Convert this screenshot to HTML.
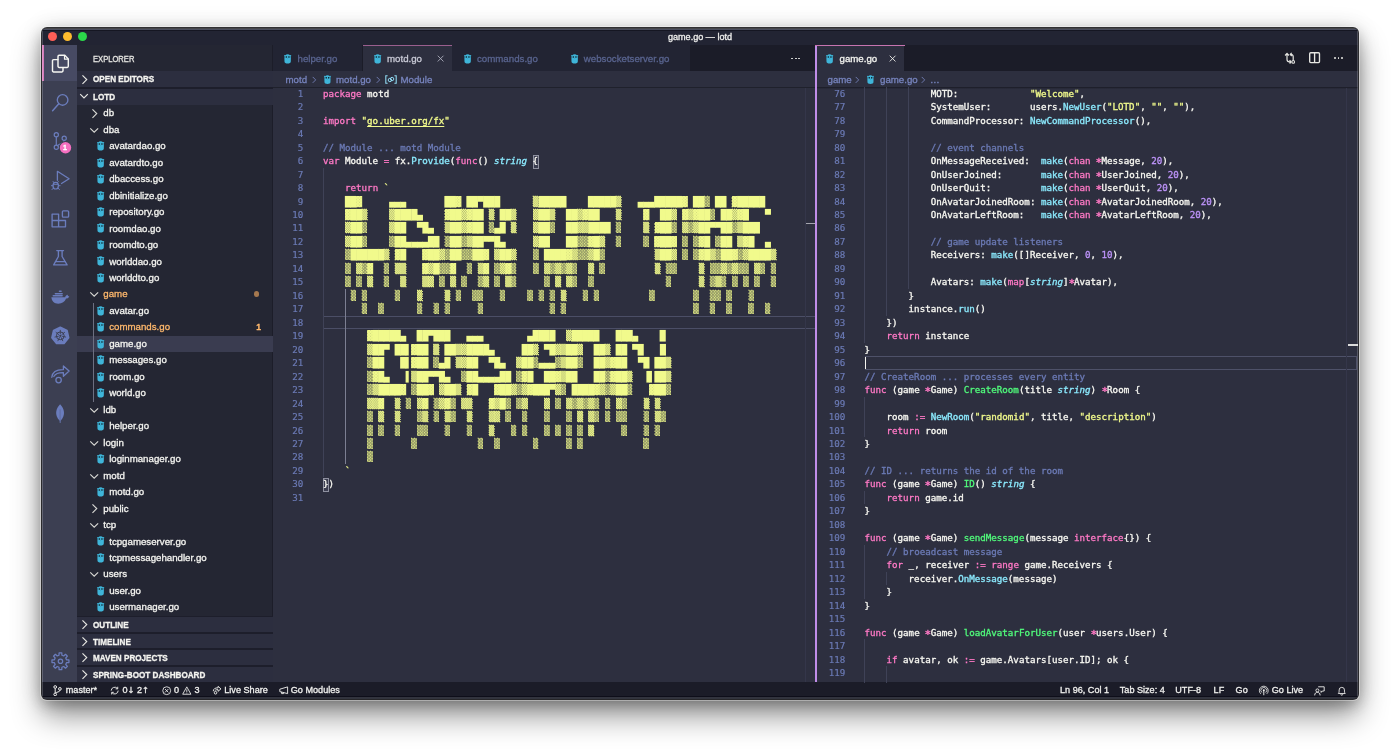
<!DOCTYPE html><html><head><meta charset="utf-8"><title>game.go — lotd</title><style>
*{box-sizing:border-box;margin:0;padding:0}
html,body{width:1400px;height:754px;overflow:hidden;background:#fff}
body{position:relative;font-family:"Liberation Sans","DejaVu Sans",sans-serif;font-size:9.7px;color:#f8f8f2}
.abs{position:absolute}
#win{position:absolute;left:42px;top:28.2px;width:1316.1px;height:670.8px;border-radius:5px;overflow:hidden;background:#2d2f3f;box-shadow:0 0 0 1px rgba(8,8,12,.82),0 0 0 2px rgba(255,255,255,.35),0 17px 30px rgba(0,0,0,.42),0 5px 14px rgba(0,0,0,.24),0 0 24px rgba(0,0,0,.12)}
#wrap{position:absolute;left:-42px;top:-28.2px;width:1400px;height:754px;will-change:transform}
.t{position:absolute;white-space:pre;line-height:12px;height:12px;-webkit-text-stroke:0.3px}
.b{font-weight:bold}
.code{position:absolute;white-space:pre;font-family:"DejaVu Sans Mono","Liberation Mono",monospace;font-size:9.17px;line-height:13.47px;height:13.47px;color:#f8f8f2;-webkit-text-stroke:0.32px}
.ln{position:absolute;white-space:pre;font-family:"DejaVu Sans Mono","Liberation Mono",monospace;font-size:9.17px;line-height:13.47px;height:13.47px;color:#6b7ab5;text-align:right;width:40px;-webkit-text-stroke:0.2px}
.k{color:#ff79c6}.f{color:#8be9fd}.g{color:#50fa7b}.s{color:#f1fa8c}.n{color:#bd93f9}.c{color:#6b7ab5}.ty{color:#8be9fd;font-style:italic}
.artl{font-size:9.75px;letter-spacing:-0.349px}.art{color:#f1fa8c;-webkit-text-stroke:0}.s1{background:rgba(241,250,140,.55)}.s2{background:rgba(241,250,140,.68)}.s3{background:rgba(241,250,140,.8)}
.as{display:inline-block;color:#ff79c6;transform:translateY(1.6px) scale(1.22)}.u{text-decoration:underline;text-decoration-thickness:1px;text-underline-offset:1.6px}
.bm{}
svg{position:absolute;overflow:visible}
</style></head><body><div id="win"><div id="wrap"><div class="abs" style="left:41.50px;top:28.00px;width:1317.00px;height:16.80px;background:#222433;"></div><div class="abs" style="left:47.80px;top:32.10px;width:9.2px;height:9.2px;border-radius:50%;background:#fe5f57"></div><div class="abs" style="left:62.90px;top:32.10px;width:9.2px;height:9.2px;border-radius:50%;background:#febc2e"></div><div class="abs" style="left:77.90px;top:32.10px;width:9.2px;height:9.2px;border-radius:50%;background:#2bd84a"></div><div class="t" style="left:600px;width:200px;text-align:center;top:30.90px;color:#f0f0ee;font-size:9.1px">game.go — lotd</div><div class="abs" style="left:41.50px;top:44.70px;width:35.60px;height:637.80px;background:#3c3f52;"></div><div class="abs" style="left:41.50px;top:44.70px;width:35.60px;height:35.90px;background:#474a63;"></div><div class="abs" style="left:42.00px;top:44.70px;width:1.80px;height:35.90px;background:#d67bbb;"></div><div class="abs" style="left:77.00px;top:44.70px;width:195.50px;height:637.80px;background:#242633;"></div><div class="abs" style="left:272.50px;top:44.70px;width:1086.00px;height:637.80px;background:#2d2f3f;"></div><div class="abs" style="left:41.50px;top:682.30px;width:1317.00px;height:16.30px;background:#1b1c28;"></div><div class="abs" style="left:272.10px;top:44.70px;width:0.90px;height:637.60px;background:#1c1d29;"></div><svg style="left:41.5px;top:44.7px" width="36" height="638" viewBox="41.5 44.7 36 638"><path d="M58.6 55 H64.3 L67.8 58.6 V66 a1.1 1.1 0 0 1 -1.1 1.1 H58.6 a1.1 1.1 0 0 1 -1.1 -1.1 V56.1 a1.1 1.1 0 0 1 1.1 -1.1 Z" fill="none" stroke="#f6f6f2" stroke-width="1.45" stroke-linejoin="round" stroke-linecap="round" /><path d="M64 55.2 V58.9 H67.6" fill="none" stroke="#f6f6f2" stroke-width="1.2" stroke-linejoin="round" stroke-linecap="round" /><path d="M57.4 59.3 H53.1 a1.1 1.1 0 0 0 -1.1 1.1 V70.5 a1.1 1.1 0 0 0 1.1 1.1 H61.4 a1.1 1.1 0 0 0 1.1 -1.1 V67.3" fill="none" stroke="#f6f6f2" stroke-width="1.45" stroke-linejoin="round" stroke-linecap="round" /><circle cx="62.1" cy="99.6" r="5.3" fill="none" stroke="#6b7dbd" stroke-width="1.35"/><path d="M58.3 103.5 L52.1 110.5" fill="none" stroke="#6b7dbd" stroke-width="1.45" stroke-linejoin="round" stroke-linecap="round" /><circle cx="55.8" cy="134.4" r="2.1" fill="none" stroke="#6b7dbd" stroke-width="1.2"/><circle cx="55.8" cy="147.0" r="2.1" fill="none" stroke="#6b7dbd" stroke-width="1.2"/><circle cx="63.7" cy="137.9" r="2.1" fill="none" stroke="#6b7dbd" stroke-width="1.2"/><path d="M55.8 136.6 V144.8 M63.7 140.1 C63.7 143.6 58.8 143.2 57.2 145.2" fill="none" stroke="#6b7dbd" stroke-width="1.2" stroke-linejoin="round" stroke-linecap="round" /><circle cx="65" cy="147.4" r="6.6" fill="#3c3f52"/><circle cx="65" cy="147.4" r="5.7" fill="#f56fc0"/><path d="M56.9 180 V171 L68.6 178.5 L61 183.2" fill="none" stroke="#6b7dbd" stroke-width="1.3" stroke-linejoin="round" stroke-linecap="round" /><ellipse cx="55.2" cy="185.4" rx="2.7" ry="3.3" fill="none" stroke="#6b7dbd" stroke-width="1.2"/><path d="M53.4 182.3 L52.6 181.2 M57 182.3 L57.8 181.2 M52.5 185.4 H50.9 M57.9 185.4 H59.6 M53 187.7 L51.5 189.3 M57.4 187.7 L58.9 189.3 M52.8 184 H57.6" fill="none" stroke="#6b7dbd" stroke-width="1.0" stroke-linejoin="round" stroke-linecap="round" /><path d="M51.6 213.8 H58.1 V220.2 H65 V226.5 H51.6 Z M58.1 220.2 V226.5 M51.6 220.2 H58.1" fill="none" stroke="#6b7dbd" stroke-width="1.35" stroke-linejoin="round" stroke-linecap="round" /><rect x="61.9" y="210.6" width="6.2" height="6.2" rx="0.9" fill="none" stroke="#6b7dbd" stroke-width="1.35"/><path d="M56.3 250.3 H63 M57.9 250.5 V256.2 L53.2 264.6 H66.6 L61.6 256.2 V250.5" fill="none" stroke="#6b7dbd" stroke-width="1.35" stroke-linejoin="round" stroke-linecap="round" /><path d="M55 261.4 H64.6" fill="none" stroke="#6b7dbd" stroke-width="1.3" stroke-linejoin="round" stroke-linecap="round" /><path d="M50.9 297 H64.6 C65 295.4 66.2 294.6 67.2 294.4 C67.2 295.4 67.6 295.9 68.8 296 C68.4 297.6 67 298.3 65.6 298.3 C64.4 301.8 61.6 303.4 57.8 303.4 C53.8 303.4 51.2 301.2 50.9 297 Z" fill="#6b7dbd"/><path d="M52.8 295.4 H61.6 M54.9 293.4 H61.6 M59 291 H61" fill="none" stroke="#6b7dbd" stroke-width="1.6" stroke-linejoin="round" stroke-linecap="round" stroke-dasharray="1.55 0.55" stroke-linecap="butt"/><polygon points="59.80,326.90 66.52,330.14 68.18,337.41 63.53,343.25 56.07,343.25 51.42,337.41 53.08,330.14" fill="#6b7dbd" stroke="#6b7dbd" stroke-width="1.6" stroke-linejoin="round"/><circle cx="59.8" cy="335.5" r="3.9" fill="none" stroke="#3c3f52" stroke-width="1"/><path d="M59.80 333.90 L59.80 329.60" stroke="#3c3f52" stroke-width="0.9"/><path d="M61.05 334.50 L64.41 331.82" stroke="#3c3f52" stroke-width="0.9"/><path d="M61.36 335.86 L65.55 336.81" stroke="#3c3f52" stroke-width="0.9"/><path d="M60.49 336.94 L62.36 340.82" stroke="#3c3f52" stroke-width="0.9"/><path d="M59.11 336.94 L57.24 340.82" stroke="#3c3f52" stroke-width="0.9"/><path d="M58.24 335.86 L54.05 336.81" stroke="#3c3f52" stroke-width="0.9"/><path d="M58.55 334.50 L55.19 331.82" stroke="#3c3f52" stroke-width="0.9"/><circle cx="59.8" cy="335.5" r="1.1" fill="#3c3f52"/><path d="M51.3 377 C51.8 371.6 56.6 369.2 62.9 369.3 V365.6 L68.6 370.8 L62.9 375.9 V372.4 C58.6 372.3 55.2 373 53.3 376.2" fill="none" stroke="#6b7dbd" stroke-width="1.3" stroke-linejoin="round" stroke-linecap="round" /><circle cx="58.1" cy="379.8" r="2.7" fill="none" stroke="#6b7dbd" stroke-width="1.3"/><path d="M59.6 404 C63.8 408.4 65.6 414.6 60.2 420.4 L60 422.8 L59.3 422.8 L59.1 420.4 C53.6 414.6 55.4 408.4 59.6 404 Z" fill="#6b7dbd"/><path d="M59.6 409 V421" stroke="#3c3f52" stroke-width="0.5" opacity=".55"/><polygon points="58.50,654.92 58.60,652.46 61.30,652.46 61.40,654.92 63.19,655.66 65.00,653.99 66.91,655.90 65.24,657.71 65.98,659.50 68.44,659.60 68.44,662.30 65.98,662.40 65.24,664.19 66.91,666.00 65.00,667.91 63.19,666.24 61.40,666.98 61.30,669.44 58.60,669.44 58.50,666.98 56.71,666.24 54.90,667.91 52.99,666.00 54.66,664.19 53.92,662.40 51.46,662.30 51.46,659.60 53.92,659.50 54.66,657.71 52.99,655.90 54.90,653.99 56.71,655.66" fill="none" stroke="#6b7dbd" stroke-width="1.25" stroke-linejoin="round"/><circle cx="59.95" cy="660.95" r="2.2" fill="none" stroke="#6b7dbd" stroke-width="1.25"/></svg><div class="t b" style="left:59px;width:12px;text-align:center;top:141.50px;font-size:7px;color:#fff">1</div><div class="t" style="left:92.70px;top:53.30px;transform:scaleX(0.885);transform-origin:0 0;color:#e6e6e2;font-size:8.6px;">EXPLORER</div><div class="abs" style="left:77.00px;top:70.80px;width:195.50px;height:16.30px;background:#2c2e3f;"></div><svg style="left:79.62px;top:73.70px" width="8.96" height="11.20" viewBox="0 0 8 10"><path d="M2.2 1.2 L6 5 L2.2 8.8" fill="none" stroke="#e8e8e4" stroke-width="1.05"/></svg><div class="t b" style="left:92.70px;top:73.20px;transform:scaleX(0.945);transform-origin:0 0;color:#f4f4f0;font-size:8.6px;">OPEN EDITORS</div><div class="abs" style="left:77.00px;top:87.10px;width:195.50px;height:17.50px;background:#2c2e3f;"></div><div class="abs" style="left:77.00px;top:87.10px;width:195.50px;height:1.60px;background:#1d1e2b;"></div><svg style="left:79.00px;top:92.20px" width="10.00" height="8.00" viewBox="0 0 10 8"><path d="M1.2 2.2 L5 6 L8.8 2.2" fill="none" stroke="#e8e8e4" stroke-width="1.15"/></svg><div class="t b" style="left:92.70px;top:90.60px;transform:scaleX(0.945);transform-origin:0 0;color:#f4f4f0;font-size:8.6px;">LOTD</div><div class="abs" style="left:77.00px;top:615.50px;width:195.50px;height:16.47px;background:#2c2e3f;"></div><div class="abs" style="left:77.00px;top:615.50px;width:195.50px;height:1.60px;background:#1d1e2b;"></div><svg style="left:79.62px;top:619.20px" width="8.96" height="11.20" viewBox="0 0 8 10"><path d="M2.2 1.2 L6 5 L2.2 8.8" fill="none" stroke="#e8e8e4" stroke-width="1.05"/></svg><div class="t b" style="left:92.70px;top:619.00px;transform:scaleX(0.945);transform-origin:0 0;color:#f4f4f0;font-size:8.6px;">OUTLINE</div><div class="abs" style="left:77.00px;top:631.97px;width:195.50px;height:16.47px;background:#2c2e3f;"></div><div class="abs" style="left:77.00px;top:631.97px;width:195.50px;height:1.60px;background:#1d1e2b;"></div><svg style="left:79.62px;top:635.67px" width="8.96" height="11.20" viewBox="0 0 8 10"><path d="M2.2 1.2 L6 5 L2.2 8.8" fill="none" stroke="#e8e8e4" stroke-width="1.05"/></svg><div class="t b" style="left:92.70px;top:635.97px;transform:scaleX(0.945);transform-origin:0 0;color:#f4f4f0;font-size:8.6px;">TIMELINE</div><div class="abs" style="left:77.00px;top:648.44px;width:195.50px;height:16.47px;background:#2c2e3f;"></div><div class="abs" style="left:77.00px;top:648.44px;width:195.50px;height:1.60px;background:#1d1e2b;"></div><svg style="left:79.62px;top:652.14px" width="8.96" height="11.20" viewBox="0 0 8 10"><path d="M2.2 1.2 L6 5 L2.2 8.8" fill="none" stroke="#e8e8e4" stroke-width="1.05"/></svg><div class="t b" style="left:92.70px;top:651.94px;transform:scaleX(0.945);transform-origin:0 0;color:#f4f4f0;font-size:8.6px;">MAVEN PROJECTS</div><div class="abs" style="left:77.00px;top:664.91px;width:195.50px;height:17.09px;background:#2c2e3f;"></div><div class="abs" style="left:77.00px;top:664.91px;width:195.50px;height:1.60px;background:#1d1e2b;"></div><svg style="left:79.62px;top:668.61px" width="8.96" height="11.20" viewBox="0 0 8 10"><path d="M2.2 1.2 L6 5 L2.2 8.8" fill="none" stroke="#e8e8e4" stroke-width="1.05"/></svg><div class="t b" style="left:92.70px;top:668.91px;transform:scaleX(0.945);transform-origin:0 0;color:#f4f4f0;font-size:8.6px;">SPRING-BOOT DASHBOARD</div><svg style="left:90.02px;top:107.70px" width="8.96" height="11.20" viewBox="0 0 8 10"><path d="M2.2 1.2 L6 5 L2.2 8.8" fill="none" stroke="#d8d8d4" stroke-width="1.05"/></svg><div class="t" style="left:103.30px;top:107.30px;color:#f4f4f0;">db</div><svg style="left:89.40px;top:125.71px" width="10.40" height="8.32" viewBox="0 0 10 8"><path d="M1.2 2.2 L5 6 L8.8 2.2" fill="none" stroke="#d8d8d4" stroke-width="1.1"/></svg><div class="t" style="left:103.30px;top:123.77px;color:#f4f4f0;">dba</div><svg style="left:96.60px;top:141.14px" width="7.30" height="9.80" viewBox="0 0 75 99"><circle cx="9" cy="17" r="8.5" fill="#3fb5d9"/><circle cx="66" cy="17" r="8.5" fill="#3fb5d9"/><path d="M4 42 C4 14 18 2 37.5 2 C57 2 71 14 71 42 L70 76 C70 92 56 97 37.5 97 C19 97 5 92 5 76 Z" fill="#3fb5d9"/><circle cx="24" cy="30" r="8.5" fill="#0b1a22"/><circle cx="51" cy="30" r="8.5" fill="#0b1a22"/><ellipse cx="37.5" cy="45" rx="7" ry="4" fill="#2f9fc4"/></svg><div class="t" style="left:109.20px;top:140.24px;color:#f4f4f0;">avatardao.go</div><svg style="left:96.60px;top:157.61px" width="7.30" height="9.80" viewBox="0 0 75 99"><circle cx="9" cy="17" r="8.5" fill="#3fb5d9"/><circle cx="66" cy="17" r="8.5" fill="#3fb5d9"/><path d="M4 42 C4 14 18 2 37.5 2 C57 2 71 14 71 42 L70 76 C70 92 56 97 37.5 97 C19 97 5 92 5 76 Z" fill="#3fb5d9"/><circle cx="24" cy="30" r="8.5" fill="#0b1a22"/><circle cx="51" cy="30" r="8.5" fill="#0b1a22"/><ellipse cx="37.5" cy="45" rx="7" ry="4" fill="#2f9fc4"/></svg><div class="t" style="left:109.20px;top:156.71px;color:#f4f4f0;">avatardto.go</div><svg style="left:96.60px;top:174.08px" width="7.30" height="9.80" viewBox="0 0 75 99"><circle cx="9" cy="17" r="8.5" fill="#3fb5d9"/><circle cx="66" cy="17" r="8.5" fill="#3fb5d9"/><path d="M4 42 C4 14 18 2 37.5 2 C57 2 71 14 71 42 L70 76 C70 92 56 97 37.5 97 C19 97 5 92 5 76 Z" fill="#3fb5d9"/><circle cx="24" cy="30" r="8.5" fill="#0b1a22"/><circle cx="51" cy="30" r="8.5" fill="#0b1a22"/><ellipse cx="37.5" cy="45" rx="7" ry="4" fill="#2f9fc4"/></svg><div class="t" style="left:109.20px;top:173.18px;color:#f4f4f0;">dbaccess.go</div><svg style="left:96.60px;top:190.55px" width="7.30" height="9.80" viewBox="0 0 75 99"><circle cx="9" cy="17" r="8.5" fill="#3fb5d9"/><circle cx="66" cy="17" r="8.5" fill="#3fb5d9"/><path d="M4 42 C4 14 18 2 37.5 2 C57 2 71 14 71 42 L70 76 C70 92 56 97 37.5 97 C19 97 5 92 5 76 Z" fill="#3fb5d9"/><circle cx="24" cy="30" r="8.5" fill="#0b1a22"/><circle cx="51" cy="30" r="8.5" fill="#0b1a22"/><ellipse cx="37.5" cy="45" rx="7" ry="4" fill="#2f9fc4"/></svg><div class="t" style="left:109.20px;top:189.65px;color:#f4f4f0;">dbinitialize.go</div><svg style="left:96.60px;top:207.02px" width="7.30" height="9.80" viewBox="0 0 75 99"><circle cx="9" cy="17" r="8.5" fill="#3fb5d9"/><circle cx="66" cy="17" r="8.5" fill="#3fb5d9"/><path d="M4 42 C4 14 18 2 37.5 2 C57 2 71 14 71 42 L70 76 C70 92 56 97 37.5 97 C19 97 5 92 5 76 Z" fill="#3fb5d9"/><circle cx="24" cy="30" r="8.5" fill="#0b1a22"/><circle cx="51" cy="30" r="8.5" fill="#0b1a22"/><ellipse cx="37.5" cy="45" rx="7" ry="4" fill="#2f9fc4"/></svg><div class="t" style="left:109.20px;top:206.12px;color:#f4f4f0;">repository.go</div><svg style="left:96.60px;top:223.49px" width="7.30" height="9.80" viewBox="0 0 75 99"><circle cx="9" cy="17" r="8.5" fill="#3fb5d9"/><circle cx="66" cy="17" r="8.5" fill="#3fb5d9"/><path d="M4 42 C4 14 18 2 37.5 2 C57 2 71 14 71 42 L70 76 C70 92 56 97 37.5 97 C19 97 5 92 5 76 Z" fill="#3fb5d9"/><circle cx="24" cy="30" r="8.5" fill="#0b1a22"/><circle cx="51" cy="30" r="8.5" fill="#0b1a22"/><ellipse cx="37.5" cy="45" rx="7" ry="4" fill="#2f9fc4"/></svg><div class="t" style="left:109.20px;top:222.59px;color:#f4f4f0;">roomdao.go</div><svg style="left:96.60px;top:239.96px" width="7.30" height="9.80" viewBox="0 0 75 99"><circle cx="9" cy="17" r="8.5" fill="#3fb5d9"/><circle cx="66" cy="17" r="8.5" fill="#3fb5d9"/><path d="M4 42 C4 14 18 2 37.5 2 C57 2 71 14 71 42 L70 76 C70 92 56 97 37.5 97 C19 97 5 92 5 76 Z" fill="#3fb5d9"/><circle cx="24" cy="30" r="8.5" fill="#0b1a22"/><circle cx="51" cy="30" r="8.5" fill="#0b1a22"/><ellipse cx="37.5" cy="45" rx="7" ry="4" fill="#2f9fc4"/></svg><div class="t" style="left:109.20px;top:239.06px;color:#f4f4f0;">roomdto.go</div><svg style="left:96.60px;top:256.43px" width="7.30" height="9.80" viewBox="0 0 75 99"><circle cx="9" cy="17" r="8.5" fill="#3fb5d9"/><circle cx="66" cy="17" r="8.5" fill="#3fb5d9"/><path d="M4 42 C4 14 18 2 37.5 2 C57 2 71 14 71 42 L70 76 C70 92 56 97 37.5 97 C19 97 5 92 5 76 Z" fill="#3fb5d9"/><circle cx="24" cy="30" r="8.5" fill="#0b1a22"/><circle cx="51" cy="30" r="8.5" fill="#0b1a22"/><ellipse cx="37.5" cy="45" rx="7" ry="4" fill="#2f9fc4"/></svg><div class="t" style="left:109.20px;top:255.53px;color:#f4f4f0;">worlddao.go</div><svg style="left:96.60px;top:272.90px" width="7.30" height="9.80" viewBox="0 0 75 99"><circle cx="9" cy="17" r="8.5" fill="#3fb5d9"/><circle cx="66" cy="17" r="8.5" fill="#3fb5d9"/><path d="M4 42 C4 14 18 2 37.5 2 C57 2 71 14 71 42 L70 76 C70 92 56 97 37.5 97 C19 97 5 92 5 76 Z" fill="#3fb5d9"/><circle cx="24" cy="30" r="8.5" fill="#0b1a22"/><circle cx="51" cy="30" r="8.5" fill="#0b1a22"/><ellipse cx="37.5" cy="45" rx="7" ry="4" fill="#2f9fc4"/></svg><div class="t" style="left:109.20px;top:272.00px;color:#f4f4f0;">worlddto.go</div><svg style="left:89.40px;top:290.41px" width="10.40" height="8.32" viewBox="0 0 10 8"><path d="M1.2 2.2 L5 6 L8.8 2.2" fill="none" stroke="#d8d8d4" stroke-width="1.1"/></svg><div class="t" style="left:103.30px;top:288.47px;color:#ffb86c;">game</div><div class="abs" style="left:253.7px;top:291.47px;width:5.6px;height:5.6px;border-radius:50%;background:#a5784f"></div><svg style="left:96.60px;top:305.84px" width="7.30" height="9.80" viewBox="0 0 75 99"><circle cx="9" cy="17" r="8.5" fill="#3fb5d9"/><circle cx="66" cy="17" r="8.5" fill="#3fb5d9"/><path d="M4 42 C4 14 18 2 37.5 2 C57 2 71 14 71 42 L70 76 C70 92 56 97 37.5 97 C19 97 5 92 5 76 Z" fill="#3fb5d9"/><circle cx="24" cy="30" r="8.5" fill="#0b1a22"/><circle cx="51" cy="30" r="8.5" fill="#0b1a22"/><ellipse cx="37.5" cy="45" rx="7" ry="4" fill="#2f9fc4"/></svg><div class="t" style="left:109.20px;top:304.94px;color:#f4f4f0;">avatar.go</div><svg style="left:96.60px;top:322.31px" width="7.30" height="9.80" viewBox="0 0 75 99"><circle cx="9" cy="17" r="8.5" fill="#3fb5d9"/><circle cx="66" cy="17" r="8.5" fill="#3fb5d9"/><path d="M4 42 C4 14 18 2 37.5 2 C57 2 71 14 71 42 L70 76 C70 92 56 97 37.5 97 C19 97 5 92 5 76 Z" fill="#3fb5d9"/><circle cx="24" cy="30" r="8.5" fill="#0b1a22"/><circle cx="51" cy="30" r="8.5" fill="#0b1a22"/><ellipse cx="37.5" cy="45" rx="7" ry="4" fill="#2f9fc4"/></svg><div class="t" style="left:109.20px;top:321.41px;color:#ffb86c;">commands.go</div><div class="t b" style="left:256.20px;top:321.41px;color:#ffb86c;font-size:8.6px;">1</div><div class="abs" style="left:77.00px;top:335.58px;width:195.50px;height:16.47px;background:#3a3c50;"></div><svg style="left:96.60px;top:338.78px" width="7.30" height="9.80" viewBox="0 0 75 99"><circle cx="9" cy="17" r="8.5" fill="#3fb5d9"/><circle cx="66" cy="17" r="8.5" fill="#3fb5d9"/><path d="M4 42 C4 14 18 2 37.5 2 C57 2 71 14 71 42 L70 76 C70 92 56 97 37.5 97 C19 97 5 92 5 76 Z" fill="#3fb5d9"/><circle cx="24" cy="30" r="8.5" fill="#0b1a22"/><circle cx="51" cy="30" r="8.5" fill="#0b1a22"/><ellipse cx="37.5" cy="45" rx="7" ry="4" fill="#2f9fc4"/></svg><div class="t" style="left:109.20px;top:337.88px;color:#f4f4f0;">game.go</div><svg style="left:96.60px;top:355.25px" width="7.30" height="9.80" viewBox="0 0 75 99"><circle cx="9" cy="17" r="8.5" fill="#3fb5d9"/><circle cx="66" cy="17" r="8.5" fill="#3fb5d9"/><path d="M4 42 C4 14 18 2 37.5 2 C57 2 71 14 71 42 L70 76 C70 92 56 97 37.5 97 C19 97 5 92 5 76 Z" fill="#3fb5d9"/><circle cx="24" cy="30" r="8.5" fill="#0b1a22"/><circle cx="51" cy="30" r="8.5" fill="#0b1a22"/><ellipse cx="37.5" cy="45" rx="7" ry="4" fill="#2f9fc4"/></svg><div class="t" style="left:109.20px;top:354.35px;color:#f4f4f0;">messages.go</div><svg style="left:96.60px;top:371.72px" width="7.30" height="9.80" viewBox="0 0 75 99"><circle cx="9" cy="17" r="8.5" fill="#3fb5d9"/><circle cx="66" cy="17" r="8.5" fill="#3fb5d9"/><path d="M4 42 C4 14 18 2 37.5 2 C57 2 71 14 71 42 L70 76 C70 92 56 97 37.5 97 C19 97 5 92 5 76 Z" fill="#3fb5d9"/><circle cx="24" cy="30" r="8.5" fill="#0b1a22"/><circle cx="51" cy="30" r="8.5" fill="#0b1a22"/><ellipse cx="37.5" cy="45" rx="7" ry="4" fill="#2f9fc4"/></svg><div class="t" style="left:109.20px;top:370.82px;color:#f4f4f0;">room.go</div><svg style="left:96.60px;top:388.19px" width="7.30" height="9.80" viewBox="0 0 75 99"><circle cx="9" cy="17" r="8.5" fill="#3fb5d9"/><circle cx="66" cy="17" r="8.5" fill="#3fb5d9"/><path d="M4 42 C4 14 18 2 37.5 2 C57 2 71 14 71 42 L70 76 C70 92 56 97 37.5 97 C19 97 5 92 5 76 Z" fill="#3fb5d9"/><circle cx="24" cy="30" r="8.5" fill="#0b1a22"/><circle cx="51" cy="30" r="8.5" fill="#0b1a22"/><ellipse cx="37.5" cy="45" rx="7" ry="4" fill="#2f9fc4"/></svg><div class="t" style="left:109.20px;top:387.29px;color:#f4f4f0;">world.go</div><svg style="left:89.40px;top:405.70px" width="10.40" height="8.32" viewBox="0 0 10 8"><path d="M1.2 2.2 L5 6 L8.8 2.2" fill="none" stroke="#d8d8d4" stroke-width="1.1"/></svg><div class="t" style="left:103.30px;top:403.76px;color:#f4f4f0;">ldb</div><svg style="left:96.60px;top:421.13px" width="7.30" height="9.80" viewBox="0 0 75 99"><circle cx="9" cy="17" r="8.5" fill="#3fb5d9"/><circle cx="66" cy="17" r="8.5" fill="#3fb5d9"/><path d="M4 42 C4 14 18 2 37.5 2 C57 2 71 14 71 42 L70 76 C70 92 56 97 37.5 97 C19 97 5 92 5 76 Z" fill="#3fb5d9"/><circle cx="24" cy="30" r="8.5" fill="#0b1a22"/><circle cx="51" cy="30" r="8.5" fill="#0b1a22"/><ellipse cx="37.5" cy="45" rx="7" ry="4" fill="#2f9fc4"/></svg><div class="t" style="left:109.20px;top:420.23px;color:#f4f4f0;">helper.go</div><svg style="left:89.40px;top:438.64px" width="10.40" height="8.32" viewBox="0 0 10 8"><path d="M1.2 2.2 L5 6 L8.8 2.2" fill="none" stroke="#d8d8d4" stroke-width="1.1"/></svg><div class="t" style="left:103.30px;top:436.70px;color:#f4f4f0;">login</div><svg style="left:96.60px;top:454.07px" width="7.30" height="9.80" viewBox="0 0 75 99"><circle cx="9" cy="17" r="8.5" fill="#3fb5d9"/><circle cx="66" cy="17" r="8.5" fill="#3fb5d9"/><path d="M4 42 C4 14 18 2 37.5 2 C57 2 71 14 71 42 L70 76 C70 92 56 97 37.5 97 C19 97 5 92 5 76 Z" fill="#3fb5d9"/><circle cx="24" cy="30" r="8.5" fill="#0b1a22"/><circle cx="51" cy="30" r="8.5" fill="#0b1a22"/><ellipse cx="37.5" cy="45" rx="7" ry="4" fill="#2f9fc4"/></svg><div class="t" style="left:109.20px;top:453.17px;color:#f4f4f0;">loginmanager.go</div><svg style="left:89.40px;top:471.58px" width="10.40" height="8.32" viewBox="0 0 10 8"><path d="M1.2 2.2 L5 6 L8.8 2.2" fill="none" stroke="#d8d8d4" stroke-width="1.1"/></svg><div class="t" style="left:103.30px;top:469.64px;color:#f4f4f0;">motd</div><svg style="left:96.60px;top:487.01px" width="7.30" height="9.80" viewBox="0 0 75 99"><circle cx="9" cy="17" r="8.5" fill="#3fb5d9"/><circle cx="66" cy="17" r="8.5" fill="#3fb5d9"/><path d="M4 42 C4 14 18 2 37.5 2 C57 2 71 14 71 42 L70 76 C70 92 56 97 37.5 97 C19 97 5 92 5 76 Z" fill="#3fb5d9"/><circle cx="24" cy="30" r="8.5" fill="#0b1a22"/><circle cx="51" cy="30" r="8.5" fill="#0b1a22"/><ellipse cx="37.5" cy="45" rx="7" ry="4" fill="#2f9fc4"/></svg><div class="t" style="left:109.20px;top:486.11px;color:#f4f4f0;">motd.go</div><svg style="left:90.02px;top:502.98px" width="8.96" height="11.20" viewBox="0 0 8 10"><path d="M2.2 1.2 L6 5 L2.2 8.8" fill="none" stroke="#d8d8d4" stroke-width="1.05"/></svg><div class="t" style="left:103.30px;top:502.58px;color:#f4f4f0;">public</div><svg style="left:89.40px;top:520.99px" width="10.40" height="8.32" viewBox="0 0 10 8"><path d="M1.2 2.2 L5 6 L8.8 2.2" fill="none" stroke="#d8d8d4" stroke-width="1.1"/></svg><div class="t" style="left:103.30px;top:519.05px;color:#f4f4f0;">tcp</div><svg style="left:96.60px;top:536.42px" width="7.30" height="9.80" viewBox="0 0 75 99"><circle cx="9" cy="17" r="8.5" fill="#3fb5d9"/><circle cx="66" cy="17" r="8.5" fill="#3fb5d9"/><path d="M4 42 C4 14 18 2 37.5 2 C57 2 71 14 71 42 L70 76 C70 92 56 97 37.5 97 C19 97 5 92 5 76 Z" fill="#3fb5d9"/><circle cx="24" cy="30" r="8.5" fill="#0b1a22"/><circle cx="51" cy="30" r="8.5" fill="#0b1a22"/><ellipse cx="37.5" cy="45" rx="7" ry="4" fill="#2f9fc4"/></svg><div class="t" style="left:109.20px;top:535.52px;color:#f4f4f0;">tcpgameserver.go</div><svg style="left:96.60px;top:552.89px" width="7.30" height="9.80" viewBox="0 0 75 99"><circle cx="9" cy="17" r="8.5" fill="#3fb5d9"/><circle cx="66" cy="17" r="8.5" fill="#3fb5d9"/><path d="M4 42 C4 14 18 2 37.5 2 C57 2 71 14 71 42 L70 76 C70 92 56 97 37.5 97 C19 97 5 92 5 76 Z" fill="#3fb5d9"/><circle cx="24" cy="30" r="8.5" fill="#0b1a22"/><circle cx="51" cy="30" r="8.5" fill="#0b1a22"/><ellipse cx="37.5" cy="45" rx="7" ry="4" fill="#2f9fc4"/></svg><div class="t" style="left:109.20px;top:551.99px;color:#f4f4f0;">tcpmessagehandler.go</div><svg style="left:89.40px;top:570.40px" width="10.40" height="8.32" viewBox="0 0 10 8"><path d="M1.2 2.2 L5 6 L8.8 2.2" fill="none" stroke="#d8d8d4" stroke-width="1.1"/></svg><div class="t" style="left:103.30px;top:568.46px;color:#f4f4f0;">users</div><svg style="left:96.60px;top:585.83px" width="7.30" height="9.80" viewBox="0 0 75 99"><circle cx="9" cy="17" r="8.5" fill="#3fb5d9"/><circle cx="66" cy="17" r="8.5" fill="#3fb5d9"/><path d="M4 42 C4 14 18 2 37.5 2 C57 2 71 14 71 42 L70 76 C70 92 56 97 37.5 97 C19 97 5 92 5 76 Z" fill="#3fb5d9"/><circle cx="24" cy="30" r="8.5" fill="#0b1a22"/><circle cx="51" cy="30" r="8.5" fill="#0b1a22"/><ellipse cx="37.5" cy="45" rx="7" ry="4" fill="#2f9fc4"/></svg><div class="t" style="left:109.20px;top:584.93px;color:#f4f4f0;">user.go</div><svg style="left:96.60px;top:602.30px" width="7.30" height="9.80" viewBox="0 0 75 99"><circle cx="9" cy="17" r="8.5" fill="#3fb5d9"/><circle cx="66" cy="17" r="8.5" fill="#3fb5d9"/><path d="M4 42 C4 14 18 2 37.5 2 C57 2 71 14 71 42 L70 76 C70 92 56 97 37.5 97 C19 97 5 92 5 76 Z" fill="#3fb5d9"/><circle cx="24" cy="30" r="8.5" fill="#0b1a22"/><circle cx="51" cy="30" r="8.5" fill="#0b1a22"/><ellipse cx="37.5" cy="45" rx="7" ry="4" fill="#2f9fc4"/></svg><div class="t" style="left:109.20px;top:601.40px;color:#f4f4f0;">usermanager.go</div><div class="abs" style="left:92.90px;top:302.74px;width:0.90px;height:98.82px;background:#6d6f80;"></div><div class="abs" style="left:272.50px;top:44.70px;width:543.00px;height:26.20px;background:#1b1c28;"></div><div class="abs" style="left:815.00px;top:44.70px;width:543.50px;height:26.20px;background:#1b1c28;"></div><div class="abs" style="left:273.00px;top:44.70px;width:89.50px;height:26.20px;background:#222433;"></div><div class="abs" style="left:361.70px;top:44.70px;width:0.80px;height:26.20px;background:#1b1c28;"></div><svg style="left:284.20px;top:53.80px" width="7.30" height="9.80" viewBox="0 0 75 99"><circle cx="9" cy="17" r="8.5" fill="#3fb5d9"/><circle cx="66" cy="17" r="8.5" fill="#3fb5d9"/><path d="M4 42 C4 14 18 2 37.5 2 C57 2 71 14 71 42 L70 76 C70 92 56 97 37.5 97 C19 97 5 92 5 76 Z" fill="#3fb5d9"/><circle cx="24" cy="30" r="8.5" fill="#0b1a22"/><circle cx="51" cy="30" r="8.5" fill="#0b1a22"/><ellipse cx="37.5" cy="45" rx="7" ry="4" fill="#2f9fc4"/></svg><div class="t" style="left:297.50px;top:52.70px;color:#59648f;">helper.go</div><div class="abs" style="left:362.50px;top:44.70px;width:89.90px;height:26.20px;background:#2d2f3f;"></div><div class="abs" style="left:451.60px;top:44.70px;width:0.80px;height:26.20px;background:#1b1c28;"></div><div class="abs" style="left:362.50px;top:44.70px;width:89.10px;height:0.90px;background:#9a5f8e;"></div><svg style="left:374.20px;top:53.80px" width="7.30" height="9.80" viewBox="0 0 75 99"><circle cx="9" cy="17" r="8.5" fill="#3fb5d9"/><circle cx="66" cy="17" r="8.5" fill="#3fb5d9"/><path d="M4 42 C4 14 18 2 37.5 2 C57 2 71 14 71 42 L70 76 C70 92 56 97 37.5 97 C19 97 5 92 5 76 Z" fill="#3fb5d9"/><circle cx="24" cy="30" r="8.5" fill="#0b1a22"/><circle cx="51" cy="30" r="8.5" fill="#0b1a22"/><ellipse cx="37.5" cy="45" rx="7" ry="4" fill="#2f9fc4"/></svg><div class="t" style="left:387.00px;top:52.70px;color:#c9cad6;">motd.go</div><svg style="left:436.80px;top:55.00px" width="7.2" height="7.2" viewBox="0 0 10 10"><path d="M1 1 L9 9 M9 1 L1 9" stroke="#b0b2c0" stroke-width="1.2" fill="none"/></svg><div class="abs" style="left:452.40px;top:44.70px;width:106.90px;height:26.20px;background:#222433;"></div><div class="abs" style="left:558.50px;top:44.70px;width:0.80px;height:26.20px;background:#1b1c28;"></div><svg style="left:464.20px;top:53.80px" width="7.30" height="9.80" viewBox="0 0 75 99"><circle cx="9" cy="17" r="8.5" fill="#3fb5d9"/><circle cx="66" cy="17" r="8.5" fill="#3fb5d9"/><path d="M4 42 C4 14 18 2 37.5 2 C57 2 71 14 71 42 L70 76 C70 92 56 97 37.5 97 C19 97 5 92 5 76 Z" fill="#3fb5d9"/><circle cx="24" cy="30" r="8.5" fill="#0b1a22"/><circle cx="51" cy="30" r="8.5" fill="#0b1a22"/><ellipse cx="37.5" cy="45" rx="7" ry="4" fill="#2f9fc4"/></svg><div class="t" style="left:477.00px;top:52.70px;color:#59648f;">commands.go</div><div class="abs" style="left:559.30px;top:44.70px;width:131.50px;height:26.20px;background:#222433;"></div><div class="abs" style="left:690.00px;top:44.70px;width:0.80px;height:26.20px;background:#1b1c28;"></div><svg style="left:570.50px;top:53.80px" width="7.30" height="9.80" viewBox="0 0 75 99"><circle cx="9" cy="17" r="8.5" fill="#3fb5d9"/><circle cx="66" cy="17" r="8.5" fill="#3fb5d9"/><path d="M4 42 C4 14 18 2 37.5 2 C57 2 71 14 71 42 L70 76 C70 92 56 97 37.5 97 C19 97 5 92 5 76 Z" fill="#3fb5d9"/><circle cx="24" cy="30" r="8.5" fill="#0b1a22"/><circle cx="51" cy="30" r="8.5" fill="#0b1a22"/><ellipse cx="37.5" cy="45" rx="7" ry="4" fill="#2f9fc4"/></svg><div class="t" style="left:583.80px;top:52.70px;color:#59648f;">websocketserver.go</div><div class="abs" style="left:816.50px;top:44.70px;width:88.00px;height:26.20px;background:#2d2f3f;"></div><div class="abs" style="left:903.70px;top:44.70px;width:0.80px;height:26.20px;background:#1b1c28;"></div><div class="abs" style="left:816.50px;top:44.70px;width:87.20px;height:0.90px;background:#c774b0;"></div><svg style="left:826.40px;top:53.80px" width="7.30" height="9.80" viewBox="0 0 75 99"><circle cx="9" cy="17" r="8.5" fill="#3fb5d9"/><circle cx="66" cy="17" r="8.5" fill="#3fb5d9"/><path d="M4 42 C4 14 18 2 37.5 2 C57 2 71 14 71 42 L70 76 C70 92 56 97 37.5 97 C19 97 5 92 5 76 Z" fill="#3fb5d9"/><circle cx="24" cy="30" r="8.5" fill="#0b1a22"/><circle cx="51" cy="30" r="8.5" fill="#0b1a22"/><ellipse cx="37.5" cy="45" rx="7" ry="4" fill="#2f9fc4"/></svg><div class="t" style="left:839.50px;top:52.70px;color:#f4f4f0;">game.go</div><svg style="left:888.90px;top:55.00px" width="7.2" height="7.2" viewBox="0 0 10 10"><path d="M1 1 L9 9 M9 1 L1 9" stroke="#f4f4f0" stroke-width="1.2" fill="none"/></svg><div class="abs" style="left:791.15px;top:57.55px;width:1.9px;height:1.9px;border-radius:50%;background:#e8e8e4"></div><div class="abs" style="left:794.65px;top:57.55px;width:1.9px;height:1.9px;border-radius:50%;background:#e8e8e4"></div><div class="abs" style="left:798.15px;top:57.55px;width:1.9px;height:1.9px;border-radius:50%;background:#e8e8e4"></div><div class="abs" style="left:1334.05px;top:57.35px;width:1.9px;height:1.9px;border-radius:50%;background:#e8e8e4"></div><div class="abs" style="left:1337.55px;top:57.35px;width:1.9px;height:1.9px;border-radius:50%;background:#e8e8e4"></div><div class="abs" style="left:1341.05px;top:57.35px;width:1.9px;height:1.9px;border-radius:50%;background:#e8e8e4"></div><svg style="left:1309.2px;top:52.1px" width="11.2" height="11.3" viewBox="0 0 11.2 11.3"><rect x="0.7" y="0.7" width="9.8" height="9.9" rx="1" fill="none" stroke="#e8e8e4" stroke-width="1.35"/><path d="M5.6 0.7 V10.6" stroke="#e8e8e4" stroke-width="1.35"/></svg><svg style="left:1284px;top:52px" width="12" height="12.4" viewBox="0 0 12 12.4"><path d="M1.1 3.5 L3 1.3 L4.9 3.5 M3 1.6 V7.4 C3 9.2 4 9.8 5.6 9.8 H6.8 M5.6 8.1 L7.1 9.8 L5.6 11.5" fill="none" stroke="#e4e4e0" stroke-width="1.2" stroke-linejoin="round"/><path d="M9.2 8.5 V4.6 C9.2 2.9 8.3 2.4 6.9 2.4 H6.5 M7.7 0.8 L6.2 2.4 L7.7 4" fill="none" stroke="#e4e4e0" stroke-width="1.2" stroke-linejoin="round"/><circle cx="9.2" cy="9.9" r="1.35" fill="none" stroke="#e4e4e0" stroke-width="1.1"/></svg><div class="t" style="left:285.50px;top:73.60px;color:#7784be;">motd</div><svg style="left:311.08px;top:75.90px" width="6.24" height="7.80" viewBox="0 0 8 10"><path d="M2.2 1.2 L6 5 L2.2 8.8" fill="none" stroke="#7784be" stroke-width="1.1"/></svg><svg style="left:323.88px;top:74.94px" width="6.93" height="9.31" viewBox="0 0 75 99"><circle cx="9" cy="17" r="8.5" fill="#3fb5d9"/><circle cx="66" cy="17" r="8.5" fill="#3fb5d9"/><path d="M4 42 C4 14 18 2 37.5 2 C57 2 71 14 71 42 L70 76 C70 92 56 97 37.5 97 C19 97 5 92 5 76 Z" fill="#3fb5d9"/><circle cx="24" cy="30" r="8.5" fill="#0b1a22"/><circle cx="51" cy="30" r="8.5" fill="#0b1a22"/><ellipse cx="37.5" cy="45" rx="7" ry="4" fill="#2f9fc4"/></svg><div class="t" style="left:336.00px;top:73.60px;color:#7784be;">motd.go</div><svg style="left:374.68px;top:75.90px" width="6.24" height="7.80" viewBox="0 0 8 10"><path d="M2.2 1.2 L6 5 L2.2 8.8" fill="none" stroke="#7784be" stroke-width="1.1"/></svg><svg style="left:384.5px;top:75.40px" width="12" height="9" viewBox="0 0 12 9"><path d="M2.6 0.8 H0.8 V8.2 H2.6 M9.4 0.8 H11.2 V8.2 H9.4" fill="none" stroke="#8fd8f0" stroke-width="1.1"/><circle cx="4.9" cy="5" r="1.7" fill="none" stroke="#8fd8f0" stroke-width="1"/><circle cx="7.1" cy="4" r="1.7" fill="none" stroke="#8fd8f0" stroke-width="1"/></svg><div class="t" style="left:400.50px;top:73.60px;color:#7784be;">Module</div><div class="t" style="left:827.50px;top:73.60px;color:#7784be;">game</div><svg style="left:854.18px;top:75.90px" width="6.24" height="7.80" viewBox="0 0 8 10"><path d="M2.2 1.2 L6 5 L2.2 8.8" fill="none" stroke="#7784be" stroke-width="1.1"/></svg><svg style="left:867.18px;top:74.94px" width="6.93" height="9.31" viewBox="0 0 75 99"><circle cx="9" cy="17" r="8.5" fill="#3fb5d9"/><circle cx="66" cy="17" r="8.5" fill="#3fb5d9"/><path d="M4 42 C4 14 18 2 37.5 2 C57 2 71 14 71 42 L70 76 C70 92 56 97 37.5 97 C19 97 5 92 5 76 Z" fill="#3fb5d9"/><circle cx="24" cy="30" r="8.5" fill="#0b1a22"/><circle cx="51" cy="30" r="8.5" fill="#0b1a22"/><ellipse cx="37.5" cy="45" rx="7" ry="4" fill="#2f9fc4"/></svg><div class="t" style="left:880.00px;top:73.60px;color:#7784be;">game.go</div><svg style="left:920.38px;top:75.90px" width="6.24" height="7.80" viewBox="0 0 8 10"><path d="M2.2 1.2 L6 5 L2.2 8.8" fill="none" stroke="#7784be" stroke-width="1.1"/></svg><div class="t" style="left:930.00px;top:73.60px;color:#7784be;">…</div><div class="abs" style="left:272.50px;top:87.20px;width:543.00px;height:1.20px;background:rgba(20,21,30,.55);"></div><div class="abs" style="left:816.50px;top:87.00px;width:542.00px;height:2.20px;background:linear-gradient(rgba(20,21,30,.8),rgba(20,21,30,0));"></div><div class="abs" style="left:815.00px;top:44.70px;width:1.60px;height:637.60px;background:#c08de8;"></div><div class="abs" style="left:815.00px;top:44.70px;width:89.50px;height:0.90px;background:#c774b0;"></div><div class="abs" style="left:323.00px;top:315.75px;width:492.00px;height:13.47px;background:transparent;border:1px solid #4b4e66;border-right:0"></div><div class="abs" style="left:323.35px;top:167.58px;width:0.85px;height:309.81px;background:#3f4257;"></div><div class="abs" style="left:345.38px;top:288.81px;width:0.85px;height:175.11px;background:#7c7f92;"></div><div class="abs" style="left:805.30px;top:88.00px;width:0.80px;height:594.30px;background:#34364a;"></div><div class="abs" style="left:805.80px;top:222.60px;width:9.30px;height:1.80px;background:#a4a5ae;"></div><div class="ln" style="left:263.30px;top:86.77px">1</div><div class="ln" style="left:263.30px;top:100.23px">2</div><div class="ln" style="left:263.30px;top:113.70px">3</div><div class="ln" style="left:263.30px;top:127.17px">4</div><div class="ln" style="left:263.30px;top:140.64px">5</div><div class="ln" style="left:263.30px;top:154.12px">6</div><div class="ln" style="left:263.30px;top:167.58px">7</div><div class="ln" style="left:263.30px;top:181.06px">8</div><div class="ln" style="left:263.30px;top:194.52px">9</div><div class="ln" style="left:263.30px;top:208.00px">10</div><div class="ln" style="left:263.30px;top:221.47px">11</div><div class="ln" style="left:263.30px;top:234.94px">12</div><div class="ln" style="left:263.30px;top:248.41px">13</div><div class="ln" style="left:263.30px;top:261.88px">14</div><div class="ln" style="left:263.30px;top:275.35px">15</div><div class="ln" style="left:263.30px;top:288.81px">16</div><div class="ln" style="left:263.30px;top:302.28px">17</div><div class="ln" style="left:263.30px;top:315.75px">18</div><div class="ln" style="left:263.30px;top:329.23px">19</div><div class="ln" style="left:263.30px;top:342.69px">20</div><div class="ln" style="left:263.30px;top:356.17px">21</div><div class="ln" style="left:263.30px;top:369.63px">22</div><div class="ln" style="left:263.30px;top:383.11px">23</div><div class="ln" style="left:263.30px;top:396.57px">24</div><div class="ln" style="left:263.30px;top:410.05px">25</div><div class="ln" style="left:263.30px;top:423.51px">26</div><div class="ln" style="left:263.30px;top:436.99px">27</div><div class="ln" style="left:263.30px;top:450.45px">28</div><div class="ln" style="left:263.30px;top:463.93px">29</div><div class="ln" style="left:263.30px;top:477.39px">30</div><div class="ln" style="left:263.30px;top:490.87px">31</div><div class="abs" style="left:532.97px;top:154.81px;width:6.01px;height:13.87px;background:#3b3d50;border:0.8px solid #8f91a0"></div><div class="abs" style="left:322.60px;top:478.09px;width:6.01px;height:13.87px;background:#3b3d50;border:0.8px solid #8f91a0"></div><div class="code" style="left:323.00px;top:86.77px"><span class="k">package</span> motd</div><div class="code" style="left:323.00px;top:113.70px"><span class="k">import</span> <span class="s">&quot;</span><span class="s u">go.uber.org/fx</span><span class="s">&quot;</span></div><div class="code" style="left:323.00px;top:140.64px"><span class="c">// Module ... motd Module</span></div><div class="code" style="left:323.00px;top:154.12px"><span class="k">var</span> Module <span class="k">=</span> fx.<span class="f">Provide</span>(<span class="k">func</span>() <span class="ty">string</span> <span class="bm">{</span></div><div class="code" style="left:323.00px;top:181.06px">    <span class="k">return</span> <span class="s">`</span></div><div class="code artl" style="left:323.00px;top:194.52px">    <span class="art">██<span class="s3">▓</span>     ▄▄▄       ██<span class="s3">▓</span> ██▀███      <span class="s2">▒</span>█████    █████<span class="s2">▒</span>   ▄▄▄█████<span class="s3">▓</span> ██<span class="s1">░</span> ██ <span class="s3">▓</span>█████ </span></div><div class="code artl" style="left:323.00px;top:208.00px">    <span class="art"><span class="s3">▓</span>██<span class="s2">▒</span>    <span class="s2">▒</span>████▄    <span class="s3">▓</span>██<span class="s2">▒</span><span class="s3">▓</span>██ <span class="s2">▒</span> ██<span class="s2">▒</span>   <span class="s2">▒</span>██<span class="s2">▒</span>  ██<span class="s2">▒</span><span class="s3">▓</span>██   <span class="s2">▒</span>    <span class="s3">▓</span>  ██<span class="s2">▒</span> <span class="s3">▓</span><span class="s2">▒</span><span class="s3">▓</span>██<span class="s1">░</span> ██<span class="s2">▒</span><span class="s3">▓</span>█   ▀ </span></div><div class="code artl" style="left:323.00px;top:221.47px">    <span class="art"><span class="s2">▒</span>██<span class="s1">░</span>    <span class="s2">▒</span>██  ▀█▄  <span class="s2">▒</span>██<span class="s2">▒</span><span class="s3">▓</span>██ <span class="s1">░</span>▄█ <span class="s2">▒</span>   <span class="s2">▒</span>██<span class="s1">░</span>  ██<span class="s2">▒▒</span>████ <span class="s1">░</span>    <span class="s2">▒</span> <span class="s3">▓</span>██<span class="s1">░</span> <span class="s2">▒</span><span class="s1">░</span><span class="s2">▒</span>██▀▀██<span class="s1">░</span><span class="s2">▒</span>███   </span></div><div class="code artl" style="left:323.00px;top:234.94px">    <span class="art"><span class="s2">▒</span>██<span class="s1">░</span>    <span class="s1">░</span>██▄▄▄▄██ <span class="s1">░</span>██<span class="s1">░</span><span class="s2">▒</span>██▀▀█▄     <span class="s2">▒</span>██   ██<span class="s1">░░</span><span class="s3">▓</span>█<span class="s2">▒</span>  <span class="s1">░</span>    <span class="s1">░</span> <span class="s3">▓</span>██<span class="s3">▓</span> <span class="s1">░</span> <span class="s1">░</span><span class="s3">▓</span>█ <span class="s1">░</span>██ <span class="s2">▒</span><span class="s3">▓</span>█  ▄ </span></div><div class="code artl" style="left:323.00px;top:248.41px">    <span class="art"><span class="s1">░</span>██████<span class="s2">▒</span> <span class="s3">▓</span>█   <span class="s3">▓</span>██<span class="s2">▒</span><span class="s1">░</span>██<span class="s1">░░</span>██<span class="s3">▓</span> <span class="s2">▒</span>██<span class="s2">▒</span>   <span class="s1">░</span> ████<span class="s3">▓</span><span class="s2">▒</span><span class="s1">░░</span><span class="s2">▒</span>█<span class="s1">░</span>         <span class="s2">▒</span>██<span class="s2">▒</span> <span class="s1">░</span> <span class="s1">░</span><span class="s3">▓</span>█<span class="s2">▒</span><span class="s1">░</span>██<span class="s3">▓</span><span class="s1">░</span><span class="s2">▒</span>████<span class="s2">▒</span></span></div><div class="code artl" style="left:323.00px;top:261.88px">    <span class="art"><span class="s1">░</span> <span class="s2">▒</span><span class="s1">░</span><span class="s3">▓</span>  <span class="s1">░</span> <span class="s2">▒▒</span>   <span class="s3">▓</span><span class="s2">▒</span>█<span class="s1">░░</span><span class="s3">▓</span>  <span class="s1">░</span> <span class="s2">▒</span><span class="s3">▓</span> <span class="s1">░</span><span class="s2">▒</span><span class="s3">▓</span><span class="s1">░</span>   <span class="s1">░</span> <span class="s2">▒</span><span class="s1">░</span><span class="s2">▒</span><span class="s1">░</span><span class="s2">▒</span><span class="s1">░</span>  <span class="s2">▒</span> <span class="s1">░</span>         <span class="s2">▒</span> <span class="s1">░░</span>    <span class="s2">▒</span> <span class="s1">░░</span><span class="s2">▒</span><span class="s1">░</span><span class="s2">▒</span><span class="s1">░░</span> <span class="s2">▒</span><span class="s1">░</span> <span class="s1">░</span></span></div><div class="code artl" style="left:323.00px;top:275.35px">    <span class="art"><span class="s1">░</span> <span class="s1">░</span> <span class="s2">▒</span>  <span class="s1">░</span>  <span class="s2">▒</span>   <span class="s2">▒▒</span> <span class="s1">░</span> <span class="s2">▒</span> <span class="s1">░</span>  <span class="s1">░</span><span class="s2">▒</span> <span class="s1">░</span> <span class="s2">▒</span><span class="s1">░</span>     <span class="s1">░</span> <span class="s2">▒</span> <span class="s2">▒</span><span class="s1">░</span>  <span class="s1">░</span>             <span class="s1">░</span>     <span class="s2">▒</span> <span class="s1">░</span><span class="s2">▒</span><span class="s1">░</span> <span class="s1">░</span> <span class="s1">░</span> <span class="s1">░</span>  <span class="s1">░</span></span></div><div class="code artl" style="left:323.00px;top:288.81px">    <span class="art"> <span class="s1">░</span> <span class="s1">░</span>     <span class="s1">░</span>   <span class="s2">▒</span>    <span class="s2">▒</span> <span class="s1">░</span>  <span class="s1">░░</span>   <span class="s1">░</span>    <span class="s1">░</span> <span class="s1">░</span> <span class="s1">░</span> <span class="s2">▒</span>   <span class="s1">░</span> <span class="s1">░</span>         <span class="s1">░</span>       <span class="s1">░</span>  <span class="s1">░░</span> <span class="s1">░</span>   <span class="s1">░</span>   </span></div><div class="code artl" style="left:323.00px;top:302.28px">    <span class="art">   <span class="s1">░</span>  <span class="s1">░</span>      <span class="s1">░</span>  <span class="s1">░</span> <span class="s1">░</span>     <span class="s1">░</span>            <span class="s1">░</span> <span class="s1">░</span>                       <span class="s1">░</span>  <span class="s1">░</span>  <span class="s1">░</span>   <span class="s1">░</span>  <span class="s1">░</span></span></div><div class="code artl" style="left:323.00px;top:329.23px">        <span class="art"><span class="s3">▓</span>█████▄  ██▀███   ▄▄▄        ▄████  <span class="s2">▒</span>█████   ███▄    █ </span></div><div class="code artl" style="left:323.00px;top:342.69px">        <span class="art"><span class="s2">▒</span>██▀ ██▌<span class="s3">▓</span>██ <span class="s2">▒</span> ██<span class="s2">▒▒</span>████▄     ██<span class="s2">▒</span> ▀█<span class="s2">▒▒</span>██<span class="s2">▒</span>  ██<span class="s2">▒</span> ██ ▀█   █ </span></div><div class="code artl" style="left:323.00px;top:356.17px">        <span class="art"><span class="s1">░</span>██   █▌<span class="s3">▓</span>██ <span class="s1">░</span>▄█ <span class="s2">▒▒</span>██  ▀█▄  <span class="s2">▒</span>██<span class="s1">░</span>▄▄▄<span class="s1">░</span><span class="s2">▒</span>██<span class="s1">░</span>  ██<span class="s2">▒</span><span class="s3">▓</span>██  ▀█ ██<span class="s2">▒</span></span></div><div class="code artl" style="left:323.00px;top:369.63px">        <span class="art"><span class="s1">░</span><span class="s3">▓</span>█▄   ▌<span class="s2">▒</span>██▀▀█▄  <span class="s1">░</span>██▄▄▄▄██ <span class="s1">░</span><span class="s3">▓</span>█  ██<span class="s3">▓</span><span class="s2">▒</span>██   ██<span class="s1">░</span><span class="s3">▓</span>██<span class="s2">▒</span>  ▐▌██<span class="s2">▒</span></span></div><div class="code artl" style="left:323.00px;top:383.11px">        <span class="art"><span class="s1">░</span><span class="s2">▒</span>████<span class="s3">▓</span> <span class="s1">░</span>██<span class="s3">▓</span> <span class="s2">▒</span>██<span class="s2">▒</span> <span class="s3">▓</span>█   <span class="s3">▓</span>██<span class="s2">▒</span><span class="s1">░</span><span class="s2">▒</span><span class="s3">▓</span>███▀<span class="s2">▒</span><span class="s1">░</span> ████<span class="s3">▓</span><span class="s2">▒</span><span class="s1">░</span><span class="s2">▒</span>██<span class="s1">░</span>   <span class="s3">▓</span>██<span class="s1">░</span></span></div><div class="code artl" style="left:323.00px;top:396.57px">        <span class="art"><span class="s2">▒▒</span><span class="s3">▓</span>  <span class="s2">▒</span> <span class="s1">░</span> <span class="s2">▒</span><span class="s3">▓</span> <span class="s1">░</span><span class="s2">▒</span><span class="s3">▓</span><span class="s1">░</span> <span class="s2">▒▒</span>   <span class="s3">▓</span><span class="s2">▒</span>█<span class="s1">░</span> <span class="s1">░</span><span class="s2">▒</span>   <span class="s2">▒</span> <span class="s1">░</span> <span class="s2">▒</span><span class="s1">░</span><span class="s2">▒</span><span class="s1">░</span><span class="s2">▒</span><span class="s1">░</span> <span class="s1">░</span> <span class="s2">▒</span><span class="s1">░</span>   <span class="s2">▒</span> <span class="s2">▒</span> </span></div><div class="code artl" style="left:323.00px;top:410.05px">        <span class="art"><span class="s1">░</span> <span class="s2">▒</span>  <span class="s2">▒</span>   <span class="s1">░</span><span class="s2">▒</span> <span class="s1">░</span> <span class="s2">▒</span><span class="s1">░</span>  <span class="s2">▒</span>   <span class="s2">▒▒</span> <span class="s1">░</span>  <span class="s1">░</span>   <span class="s1">░</span>   <span class="s1">░</span> <span class="s2">▒</span> <span class="s2">▒</span><span class="s1">░</span> <span class="s1">░</span> <span class="s1">░░</span>   <span class="s1">░</span> <span class="s2">▒</span><span class="s1">░</span></span></div><div class="code artl" style="left:323.00px;top:423.51px">        <span class="art"><span class="s1">░</span> <span class="s1">░</span>  <span class="s1">░</span>   <span class="s1">░░</span>   <span class="s1">░</span>   <span class="s1">░</span>   <span class="s2">▒</span>   <span class="s1">░</span> <span class="s1">░</span>   <span class="s1">░</span> <span class="s1">░</span> <span class="s1">░</span> <span class="s1">░</span> <span class="s2">▒</span>     <span class="s1">░</span>   <span class="s1">░</span> <span class="s1">░</span> </span></div><div class="code artl" style="left:323.00px;top:436.99px">        <span class="art"><span class="s1">░</span>       <span class="s1">░</span>           <span class="s1">░</span>  <span class="s1">░</span>      <span class="s1">░</span>     <span class="s1">░</span> <span class="s1">░</span>           <span class="s1">░</span> </span></div><div class="code artl" style="left:323.00px;top:450.45px">        <span class="art"><span class="s1">░</span>                                                      </span></div><div class="code" style="left:323.00px;top:463.93px">    <span class="s">`</span></div><div class="code" style="left:323.00px;top:477.39px"><span class="bm">}</span>)</div><div class="abs" style="left:864.50px;top:356.17px;width:492.50px;height:13.47px;background:transparent;border:1px solid #4e5169"></div><div class="abs" style="left:864.50px;top:357.17px;width:1.00px;height:11.47px;background:#f4f4f0;"></div><div class="abs" style="left:1346.20px;top:88.00px;width:0.80px;height:594.30px;background:#34364a;"></div><div class="abs" style="left:1347.90px;top:344.20px;width:10.20px;height:1.80px;background:#dcdcdc;"></div><div class="ln" style="left:805.30px;top:86.77px">76</div><div class="ln" style="left:805.30px;top:100.23px">77</div><div class="ln" style="left:805.30px;top:113.70px">78</div><div class="ln" style="left:805.30px;top:127.17px">79</div><div class="ln" style="left:805.30px;top:140.64px">80</div><div class="ln" style="left:805.30px;top:154.12px">81</div><div class="ln" style="left:805.30px;top:167.58px">82</div><div class="ln" style="left:805.30px;top:181.06px">83</div><div class="ln" style="left:805.30px;top:194.52px">84</div><div class="ln" style="left:805.30px;top:208.00px">85</div><div class="ln" style="left:805.30px;top:221.47px">86</div><div class="ln" style="left:805.30px;top:234.94px">87</div><div class="ln" style="left:805.30px;top:248.41px">88</div><div class="ln" style="left:805.30px;top:261.88px">89</div><div class="ln" style="left:805.30px;top:275.35px">90</div><div class="ln" style="left:805.30px;top:288.81px">91</div><div class="ln" style="left:805.30px;top:302.28px">92</div><div class="ln" style="left:805.30px;top:315.75px">93</div><div class="ln" style="left:805.30px;top:329.23px">94</div><div class="ln" style="left:805.30px;top:342.69px">95</div><div class="ln" style="left:805.30px;top:356.17px">96</div><div class="ln" style="left:805.30px;top:369.63px">97</div><div class="ln" style="left:805.30px;top:383.11px">98</div><div class="ln" style="left:805.30px;top:396.57px">99</div><div class="ln" style="left:805.30px;top:410.05px">100</div><div class="ln" style="left:805.30px;top:423.51px">101</div><div class="ln" style="left:805.30px;top:436.99px">102</div><div class="ln" style="left:805.30px;top:450.45px">103</div><div class="ln" style="left:805.30px;top:463.93px">104</div><div class="ln" style="left:805.30px;top:477.39px">105</div><div class="ln" style="left:805.30px;top:490.87px">106</div><div class="ln" style="left:805.30px;top:504.33px">107</div><div class="ln" style="left:805.30px;top:517.80px">108</div><div class="ln" style="left:805.30px;top:531.27px">109</div><div class="ln" style="left:805.30px;top:544.75px">110</div><div class="ln" style="left:805.30px;top:558.22px">111</div><div class="ln" style="left:805.30px;top:571.69px">112</div><div class="ln" style="left:805.30px;top:585.16px">113</div><div class="ln" style="left:805.30px;top:598.62px">114</div><div class="ln" style="left:805.30px;top:612.10px">115</div><div class="ln" style="left:805.30px;top:625.57px">116</div><div class="ln" style="left:805.30px;top:639.03px">117</div><div class="ln" style="left:805.30px;top:652.50px">118</div><div class="ln" style="left:805.30px;top:665.98px">119</div><div class="abs" style="left:864.05px;top:86.77px;width:0.85px;height:255.93px;background:#3f4257;"></div><div class="abs" style="left:886.08px;top:86.77px;width:0.85px;height:228.99px;background:#3f4257;"></div><div class="abs" style="left:908.11px;top:86.77px;width:0.85px;height:202.05px;background:#3f4257;"></div><div class="abs" style="left:864.05px;top:396.57px;width:0.85px;height:40.41px;background:#3f4257;"></div><div class="abs" style="left:864.05px;top:490.87px;width:0.85px;height:13.47px;background:#3f4257;"></div><div class="abs" style="left:864.05px;top:544.75px;width:0.85px;height:53.88px;background:#3f4257;"></div><div class="abs" style="left:886.08px;top:571.69px;width:0.85px;height:13.47px;background:#3f4257;"></div><div class="abs" style="left:864.05px;top:639.03px;width:0.85px;height:44.45px;background:#3f4257;"></div><div class="abs" style="left:886.08px;top:665.98px;width:0.85px;height:17.51px;background:#3f4257;"></div><div class="code" style="left:864.50px;top:86.77px">            MOTD:             <span class="s">&quot;Welcome&quot;</span>,</div><div class="code" style="left:864.50px;top:100.23px">            SystemUser:       users.<span class="f">NewUser</span>(<span class="s">&quot;LOTD&quot;</span>, <span class="s">&quot;&quot;</span>, <span class="s">&quot;&quot;</span>),</div><div class="code" style="left:864.50px;top:113.70px">            CommandProcessor: <span class="f">NewCommandProcessor</span>(),</div><div class="code" style="left:864.50px;top:140.64px">            <span class="c">// event channels</span></div><div class="code" style="left:864.50px;top:154.12px">            OnMessageReceived:  <span class="f">make</span>(<span class="k">chan</span> <span class="as">*</span>Message, <span class="n">20</span>),</div><div class="code" style="left:864.50px;top:167.58px">            OnUserJoined:       <span class="f">make</span>(<span class="k">chan</span> <span class="as">*</span>UserJoined, <span class="n">20</span>),</div><div class="code" style="left:864.50px;top:181.06px">            OnUserQuit:         <span class="f">make</span>(<span class="k">chan</span> <span class="as">*</span>UserQuit, <span class="n">20</span>),</div><div class="code" style="left:864.50px;top:194.52px">            OnAvatarJoinedRoom: <span class="f">make</span>(<span class="k">chan</span> <span class="as">*</span>AvatarJoinedRoom, <span class="n">20</span>),</div><div class="code" style="left:864.50px;top:208.00px">            OnAvatarLeftRoom:   <span class="f">make</span>(<span class="k">chan</span> <span class="as">*</span>AvatarLeftRoom, <span class="n">20</span>),</div><div class="code" style="left:864.50px;top:234.94px">            <span class="c">// game update listeners</span></div><div class="code" style="left:864.50px;top:248.41px">            Receivers: <span class="f">make</span>([]Receiver, <span class="n">0</span>, <span class="n">10</span>),</div><div class="code" style="left:864.50px;top:275.35px">            Avatars: <span class="f">make</span>(<span class="k">map</span>[<span class="ty">string</span>]<span class="as">*</span>Avatar),</div><div class="code" style="left:864.50px;top:288.81px">        }</div><div class="code" style="left:864.50px;top:302.28px">        instance.<span class="f">run</span>()</div><div class="code" style="left:864.50px;top:315.75px">    })</div><div class="code" style="left:864.50px;top:329.23px">    <span class="k">return</span> instance</div><div class="code" style="left:864.50px;top:342.69px">}</div><div class="code" style="left:864.50px;top:369.63px"><span class="c">// CreateRoom ... processes every entity</span></div><div class="code" style="left:864.50px;top:383.11px"><span class="k">func</span> (game <span class="as">*</span>Game) <span class="g">CreateRoom</span>(title <span class="ty">string</span>) <span class="as">*</span>Room {</div><div class="code" style="left:864.50px;top:410.05px">    room <span class="k">:=</span> <span class="f">NewRoom</span>(<span class="s">&quot;randomid&quot;</span>, title, <span class="s">&quot;description&quot;</span>)</div><div class="code" style="left:864.50px;top:423.51px">    <span class="k">return</span> room</div><div class="code" style="left:864.50px;top:436.99px">}</div><div class="code" style="left:864.50px;top:463.93px"><span class="c">// ID ... returns the id of the room</span></div><div class="code" style="left:864.50px;top:477.39px"><span class="k">func</span> (game <span class="as">*</span>Game) <span class="g">ID</span>() <span class="ty">string</span> {</div><div class="code" style="left:864.50px;top:490.87px">    <span class="k">return</span> game.id</div><div class="code" style="left:864.50px;top:504.33px">}</div><div class="code" style="left:864.50px;top:531.27px"><span class="k">func</span> (game <span class="as">*</span>Game) <span class="g">sendMessage</span>(message <span class="k">interface</span>{}) {</div><div class="code" style="left:864.50px;top:544.75px">    <span class="c">// broeadcast message</span></div><div class="code" style="left:864.50px;top:558.22px">    <span class="k">for</span> _, receiver <span class="k">:=</span> <span class="k">range</span> game.Receivers {</div><div class="code" style="left:864.50px;top:571.69px">        receiver.<span class="f">OnMessage</span>(message)</div><div class="code" style="left:864.50px;top:585.16px">    }</div><div class="code" style="left:864.50px;top:598.62px">}</div><div class="code" style="left:864.50px;top:625.57px"><span class="k">func</span> (game <span class="as">*</span>Game) <span class="g">loadAvatarForUser</span>(user <span class="as">*</span>users.User) {</div><div class="code" style="left:864.50px;top:652.50px">    <span class="k">if</span> avatar, ok <span class="k">:=</span> game.Avatars[user.ID]; ok {</div><svg style="left:53.4px;top:684.70px" width="9" height="11.4" viewBox="0 0 9 11.4"><circle cx="2.2" cy="2" r="1.35" fill="none" stroke="#f0f0ee" stroke-width="1"/><circle cx="2.2" cy="9.4" r="1.35" fill="none" stroke="#f0f0ee" stroke-width="1"/><circle cx="6.9" cy="3.9" r="1.35" fill="none" stroke="#f0f0ee" stroke-width="1"/><path d="M2.2 3.4 V8 M6.9 5.3 C6.9 7.2 3.6 6.8 2.5 8.1" fill="none" stroke="#f0f0ee" stroke-width="1"/></svg><div class="t" style="left:65.80px;top:684.30px;color:#f0f0ee;font-size:9.1px;">master*</div><svg style="left:109.8px;top:685.70px" width="9.4" height="9.2" viewBox="0 0 10 10"><path d="M1.2 5 A3.8 3.8 0 0 1 8 2.8 M8.8 5 A3.8 3.8 0 0 1 2 7.2" fill="none" stroke="#f0f0ee" stroke-width="1"/><path d="M8.3 0.8 V3.1 H6 M1.7 9.2 V6.9 H4" fill="none" stroke="#f0f0ee" stroke-width="1"/></svg><div class="t" style="left:122.4px;top:684.30px;color:#f0f0ee;font-size:9.1px">0<span style="font-family:'DejaVu Sans',sans-serif;font-size:8.3px">↓</span> 2<span style="font-family:'DejaVu Sans',sans-serif;font-size:8.3px">↑</span></div><svg style="left:161.6px;top:685.60px" width="9.4" height="9.4" viewBox="0 0 10 10"><circle cx="5" cy="5" r="4.2" fill="none" stroke="#f0f0ee" stroke-width=".9"/><path d="M3.2 3.2 L6.8 6.8 M6.8 3.2 L3.2 6.8" stroke="#f0f0ee" stroke-width=".9"/></svg><div class="t" style="left:174.00px;top:684.30px;color:#f0f0ee;font-size:9.1px;">0</div><svg style="left:181.8px;top:685.70px" width="9.6" height="9" viewBox="0 0 10 9.4"><path d="M5 0.9 L9.3 8.6 H0.7 Z" fill="none" stroke="#f0f0ee" stroke-width=".9" stroke-linejoin="round"/><path d="M5 3.6 V6.2 M5 6.9 V7.7" stroke="#f0f0ee" stroke-width=".9"/></svg><div class="t" style="left:194.60px;top:684.30px;color:#f0f0ee;font-size:9.1px;">3</div><svg style="left:211.6px;top:685.30px" width="10" height="10" viewBox="0 0 24 24"><path d="M3 15 C3 9 8 6.5 14.5 7 V3.2 L21.5 9.3 L14.5 15.2 V11.2 C11 11 8.5 11.5 6.5 14" fill="none" stroke="#f0f0ee" stroke-width="2.2" stroke-linejoin="round"/><circle cx="8.5" cy="18.6" r="3.1" fill="none" stroke="#f0f0ee" stroke-width="2.2"/></svg><div class="t" style="left:224.30px;top:684.30px;color:#f0f0ee;font-size:9.1px;">Live Share</div><svg style="left:278.6px;top:685.90px" width="10" height="9" viewBox="0 0 10 9"><path d="M0.8 3.2 L8.6 0.9 V7.6 L0.8 5.6 Z M2.6 5.9 V7.6 H4.6 V6.5" fill="none" stroke="#f0f0ee" stroke-width=".9" stroke-linejoin="round"/></svg><div class="t" style="left:290.80px;top:684.30px;color:#f0f0ee;font-size:9.1px;">Go Modules</div><div class="t" style="left:1060.00px;top:684.30px;color:#f0f0ee;font-size:9.1px;">Ln 96, Col 1</div><div class="t" style="left:1119.80px;top:684.30px;color:#f0f0ee;font-size:9.1px;">Tab Size: 4</div><div class="t" style="left:1175.30px;top:684.30px;color:#f0f0ee;font-size:9.1px;">UTF-8</div><div class="t" style="left:1213.60px;top:684.30px;color:#f0f0ee;font-size:9.1px;">LF</div><div class="t" style="left:1235.60px;top:684.30px;color:#f0f0ee;font-size:9.1px;">Go</div><svg style="left:1259px;top:685.50px" width="9.6" height="9.6" viewBox="0 0 10 10"><circle cx="5" cy="4.4" r="1.1" fill="#f0f0ee"/><path d="M3 6.8 A3 3 0 1 1 7 6.8 M1.9 8.2 A4.6 4.6 0 1 1 8.1 8.2" fill="none" stroke="#f0f0ee" stroke-width=".85"/><path d="M5 5 V9.6" stroke="#f0f0ee" stroke-width="1"/></svg><div class="t" style="left:1271.80px;top:684.30px;color:#f0f0ee;font-size:9.1px;">Go Live</div><svg style="left:1314px;top:685.50px" width="11" height="10" viewBox="0 0 11 10"><path d="M4.2 0.8 H10.2 V5 H8.4 L7.2 6.4 V5 H6.6" fill="none" stroke="#f0f0ee" stroke-width=".9" stroke-linejoin="round"/><circle cx="3.4" cy="4.4" r="1.5" fill="none" stroke="#f0f0ee" stroke-width=".9"/><path d="M0.7 9.4 C0.7 7 2 6.4 3.4 6.4 C4.8 6.4 6.1 7 6.1 9.4" fill="none" stroke="#f0f0ee" stroke-width=".9"/></svg><svg style="left:1337.2px;top:685.50px" width="9.6" height="10" viewBox="0 0 10 10"><path d="M1.4 7.6 C2.4 6.6 2.2 5.4 2.2 4 A2.8 2.8 0 0 1 7.8 4 C7.8 5.4 7.6 6.6 8.6 7.6 Z" fill="none" stroke="#f0f0ee" stroke-width=".9" stroke-linejoin="round"/><path d="M4 8.4 A1 1 0 0 0 6 8.4" fill="none" stroke="#f0f0ee" stroke-width=".9"/></svg><div class="abs" style="left:42.00px;top:28.20px;width:1316.10px;height:0.90px;background:#46464a;"></div><div class="abs" style="left:42.00px;top:29.10px;width:1316.10px;height:0.90px;background:#4b4e5f;"></div><div class="abs" style="left:42.00px;top:30.00px;width:1316.10px;height:1.00px;background:rgba(17,18,30,.75);"></div><div class="abs" style="left:42.00px;top:31.00px;width:1.30px;height:666.30px;background:rgba(255,255,255,.2);"></div><div class="abs" style="left:1356.90px;top:31.00px;width:1.20px;height:666.30px;background:rgba(255,255,255,.2);"></div><div class="abs" style="left:42.00px;top:696.20px;width:1316.10px;height:1.10px;background:#0e0e1a;"></div><div class="abs" style="left:42.00px;top:697.30px;width:1316.10px;height:1.80px;background:#32343e;"></div></div></div></body></html>
